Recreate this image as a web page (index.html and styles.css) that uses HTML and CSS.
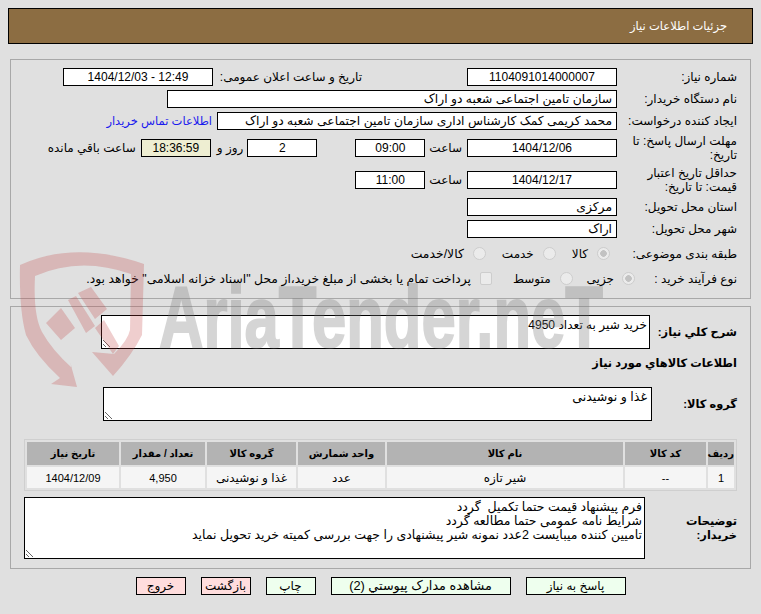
FILE: index.html
```html
<!DOCTYPE html>
<html lang="fa" dir="rtl">
<head>
<meta charset="utf-8">
<title>جزئیات اطلاعات نیاز</title>
<link rel="stylesheet" href="styles.css">
</head>
<body>
<header class="title-bar"><h1 class="title">جزئیات اطلاعات نیاز</h1></header>

<section class="panel panel-info">
  <div class="row">
    <span class="label">شماره نیاز:</span>
    <input class="box box-main num" readonly value="1104091014000007">
    <span class="label-public">تاریخ و ساعت اعلان عمومی:</span>
    <input class="box box-main num" readonly value="12:49 - 1404/12/03">
  </div>
  <div class="row">
    <span class="label">نام دستگاه خریدار:</span>
    <input class="box box-wide text" readonly value="سازمان تامین اجتماعی شعبه دو اراک">
  </div>
  <div class="row">
    <span class="label">ایجاد کننده درخواست:</span>
    <input class="box box-creator text" readonly value="محمد کریمی کمک کارشناس اداری سازمان تامین اجتماعی شعبه دو اراک">
    <a class="contact" href="#">اطلاعات تماس خریدار</a>
  </div>
  <div class="row row-tall">
    <span class="label">مهلت ارسال پاسخ: تا تاریخ:</span>
    <input class="box box-main num" readonly value="1404/12/06">
    <span class="unit">ساعت</span>
    <input class="box box-time num" readonly value="09:00">
    <input class="box box-time box-days num" readonly value="2">
    <span class="unit unit-days">روز و</span>
    <input class="box box-timer num" readonly value="18:36:59">
    <span class="unit">ساعت باقي مانده</span>
  </div>
  <div class="row row-tall">
    <span class="label">حداقل تاریخ اعتبار قیمت: تا تاریخ:</span>
    <input class="box box-main num" readonly value="1404/12/17">
    <span class="unit">ساعت</span>
    <input class="box box-time num" readonly value="11:00">
  </div>
  <div class="row">
    <span class="label">استان محل تحویل:</span>
    <input class="box box-main text" readonly value="مرکزی">
  </div>
  <div class="row">
    <span class="label">شهر محل تحویل:</span>
    <input class="box box-main text" readonly value="اراک">
  </div>
  <div class="row row-radio">
    <span class="label">طبقه بندی موضوعی:</span>
    <label class="opt opt-cat1"><input type="radio" name="cat" checked disabled>کالا</label>
    <label class="opt opt-cat2"><input type="radio" name="cat" disabled>خدمت</label>
    <label class="opt opt-cat3"><input type="radio" name="cat" disabled>کالا/خدمت</label>
  </div>
  <div class="row">
    <span class="label label-process">نوع فرآیند خرید :</span>
    <label class="opt opt-p1"><input type="radio" name="proc" checked disabled>جزیی</label>
    <label class="opt opt-p2"><input type="radio" name="proc" disabled>متوسط</label>
    <label class="opt opt-p3"><input type="checkbox" disabled>پرداخت تمام یا بخشی از مبلغ خرید،از محل "اسناد خزانه اسلامی" خواهد بود.</label>
  </div>
</section>

<section class="panel panel-detail">
  <div class="row-need">
    <span class="label-bold label-need">شرح كلي نياز:</span>
    <textarea class="area area-need" readonly>خرید شیر به تعداد 4950</textarea>
  </div>
  <h2 class="section-head">اطلاعات كالاهاي مورد نياز</h2>
  <div class="row-group">
    <span class="label-bold label-group">گروه کالا:</span>
    <textarea class="area area-group" readonly>غذا و نوشیدنی</textarea>
  </div>
  <table class="items">
    <colgroup>
      <col class="c1"><col class="c2"><col class="c3"><col class="c4"><col class="c5"><col class="c6"><col class="c7">
    </colgroup>
    <thead>
      <tr><th>ردیف</th><th>کد کالا</th><th>نام کالا</th><th>واحد شمارش</th><th>گروه کالا</th><th>تعداد / مقدار</th><th>تاریخ نیاز</th></tr>
    </thead>
    <tbody>
      <tr><td class="num">1</td><td class="num">--</td><td>شیر تازه</td><td>عدد</td><td>غذا و نوشیدنی</td><td class="num">4,950</td><td class="num">1404/12/09</td></tr>
    </tbody>
  </table>
  <div class="row-notes">
    <span class="label-bold label-notes">توضیحات خریدار:</span>
    <textarea class="area area-notes" readonly>فرم پیشنهاد قیمت حتما تکمیل  گردد
شرایط نامه عمومی حتما مطالعه گردد
تامیین کننده میبایست 2عدد نمونه شیر پیشنهادی را جهت بررسی کمیته خرید تحویل نماید</textarea>
  </div>
</section>

<nav class="actions">
  <button class="btn btn-go btn-reply" type="button">پاسخ به نیاز</button>
  <button class="btn btn-go btn-docs" type="button">مشاهده مدارک پیوستي (2)</button>
  <button class="btn btn-go btn-small" type="button">چاپ</button>
  <button class="btn btn-stop btn-small" type="button">بازگشت</button>
  <button class="btn btn-stop btn-small" type="button">خروج</button>
</nav>

<svg class="watermark" width="761" height="614" viewBox="0 0 761 614" aria-hidden="true">
  <path class="wm-red" fill-rule="evenodd" d="M20 265 Q75 240 144 264 L142 335 Q132 355 113 376 L92 352 L114 354 Q128 340 130 330 L131 274 Q80 256 35 276 Q33 315 42 332 Q52 350 72 368 L70 362 L77 387 L51 384 L60 378 Q36 356 26 335 Q19 310 20 265 Z"/>
  <path class="wm-red" d="M46 323 L61 308 L75 328 L61 340 Z M68 300 L76 296 L95 326 L86 333 Z M78 293 L91 287 L107 309 L95 319 Z M95 328 L104 320 L119 346 L113 354 Z"/>
  <text class="wm-text" x="159" y="347" textLength="444" lengthAdjust="spacingAndGlyphs">AriaTender.neT</text>
</svg>
</body>
</html>
```

FILE: styles.css
```css
* { box-sizing: border-box; }
html, body { height: 100%; }
body {
  margin: 0;
  padding: 8px;
  position: relative;
  overflow: hidden;
  background: #e0e0e0;
  color: #000;
  font: 12px/14px "Liberation Sans", "DejaVu Sans", sans-serif;
}
.title-bar {
  height: 36px;
  background: #8c6d42;
  border: 1px solid #000;
  padding-right: 25px;
  display: flex;
  align-items: center;
}
.title { margin: 0; font-size: 11.5px; font-weight: normal; color: #fff; }

.panel {
  margin: 15px 2px 0 2px;
  border: 1px solid #a8a8a8;
  padding: 8px 13px 0 0;
}
.panel-info { height: 240px; }
.panel-detail { margin-top: 7px; height: 263px; }

.row { display: flex; align-items: center; min-height: 18px; margin-bottom: 4px; }
.row-tall { min-height: 28px; }
.row-radio { min-height: 24px; }
.label { width: 120px; flex: none; padding-left: 6px; }
.label-process { width: 102px; }
.label-public { width: 254px; flex: none; white-space: nowrap; padding-right: 105px; }
.box {
  height: 18px;
  padding: 0 4px;
  border: 1px solid #000;
  background: #fff;
  color: #000;
  font: inherit;
  outline: none;
  flex: none;
  margin: 0;
}
.text { font-size: 12.3px; }
.num { font-family: "Liberation Sans", sans-serif; }
input.num { text-align: center; }
.box-main { width: 150px; }
.box-time { width: 70px; }
.box-days { margin-right: 38px; }
.box-timer { width: 70px; background: #eeeed2; }
.box-wide { width: 450px; }
.box-creator { width: 400px; }
.contact { margin-right: 5px; color: #1a1aee; text-decoration: none; white-space: nowrap; font-size: 11.5px; }
.unit { margin: 0 5px 0 4px; white-space: nowrap; }
.unit-days { margin: 0 4px 0 6px; }

.opt { display: flex; align-items: center; white-space: nowrap; }
.opt input {
  appearance: none;
  margin: -2px 0 0 9px;
  width: 13px;
  height: 13px;
  flex: none;
  border: 1.5px solid #cdcdcd;
  border-radius: 50%;
  background: #ebebeb;
}
.opt input:checked { background: radial-gradient(circle, #c2c2c2 3px, #ebebeb 3.6px); }
.opt-cat1 input { margin-right: 7px; }
.opt-cat2 input, .opt-cat3 input { margin-right: 16px; }
.opt-cat3 { font-size: 12.4px; }
.opt-p1 input { margin-right: 0; margin-left: 8px; }
.opt-p2 input { margin-right: 14px; }
.opt-p3 { font-size: 12.35px; }
.opt-p3 input { margin-right: 21px; width: 12px; height: 13px; border-radius: 2px; }

.row-need, .row-group, .row-notes { display: flex; align-items: center; }
.label-bold, .section-head { font-weight: bold; font-size: 11.4px; }
.label-need { width: 87px; flex: none; }
.label-group { width: 85px; flex: none; }
.label-notes { width: 92px; flex: none; padding-left: 20px; }
.area {
  display: block;
  flex: none;
  margin: 0;
  padding: 2px;
  border: 1px solid #000;
  background: #fff;
  color: #000;
  font: inherit;
  outline: none;
  resize: both;
}
.area-need { width: 549px; height: 34px; font-size: 12.1px; }
.area-group { width: 549px; height: 34px; font-size: 12.6px; padding-right: 4px; }
.area-notes { width: 621px; height: 62px; font-size: 12.5px; }
.section-head { margin: 7px 0 0; line-height: 14px; }
.row-group { margin-top: 17px; }

.items {
  width: 713px;
  margin-top: 18px;
  table-layout: fixed;
  border-collapse: separate;
  border-spacing: 2px;
  border: 1px solid #cfcfcf;
}
.c1 { width: 26px; }
.c2 { width: 81px; }
.c3 { width: 236px; }
.c4 { width: 87px; }
.c5 { width: 89px; }
.c6 { width: 84px; }
.c7 { width: 92px; }
.items th { height: 23px; padding: 0; background: #b3b3b3; font-size: 10px; }
.items td { height: 21px; padding: 0; background: #f5f5f5; text-align: center; }
.items td.num { font-size: 11px; }
.row-notes { margin-top: 6px; }

.actions { display: flex; justify-content: center; gap: 15px; margin-top: 8px; }
.btn {
  height: 18px;
  padding: 0;
  border: 1px solid #000;
  color: #000;
  font: inherit;
}
.btn-go { background: #eeffee; }
.btn-stop { background: #ffdddd; }
.btn-reply { width: 100px; }
.btn-docs { width: 180px; font-size: 12.8px; }
.btn-small { width: 50px; }

.watermark { position: absolute; top: 0; left: 0; pointer-events: none; }
.wm-red { fill: rgba(190, 60, 60, .25); }
.wm-text {
  font: bold 88px "Liberation Sans Narrow", "Liberation Sans", sans-serif;
  direction: ltr;
  fill: #787878;
  stroke: #787878;
  stroke-width: 2px;
  opacity: .3;
}
```
